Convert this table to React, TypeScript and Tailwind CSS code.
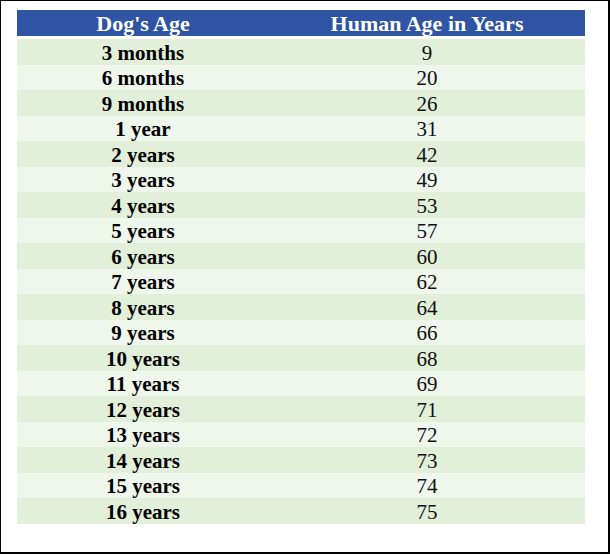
import React from "react";

const rows: [string, number][] = [
  ["3 months", 9],
  ["6 months", 20],
  ["9 months", 26],
  ["1 year", 31],
  ["2 years", 42],
  ["3 years", 49],
  ["4 years", 53],
  ["5 years", 57],
  ["6 years", 60],
  ["7 years", 62],
  ["8 years", 64],
  ["9 years", 66],
  ["10 years", 68],
  ["11 years", 69],
  ["12 years", 71],
  ["13 years", 72],
  ["14 years", 73],
  ["15 years", 74],
  ["16 years", 75],
];

export default function App() {
  return (
    <div className="w-[610px] h-[555px] bg-white">
      <div className="w-[610px] h-[554px] border-l border-t border-r-2 border-b-2 border-black pl-4 pt-[9px] font-['Liberation_Serif',serif]">
        <div className="w-[568px]">
          <div className="flex h-[26px] bg-[#2f54a3] text-white font-bold text-[22px] leading-none items-center pt-[2px]">
            <div className="w-[252px] text-center">Dog's Age</div>
            <div className="flex-1 text-center">Human Age in Years</div>
          </div>
          <div className="mt-[3px] grid grid-cols-[252px_1fr] auto-rows-[25.5px]">
            {rows.map(([dog, human], i) => {
              const bg = i % 2 === 0 ? "bg-[#e2efd9]" : "bg-[#eff6ec]";
              return (
                <React.Fragment key={dog}>
                  <div className={`${bg} flex items-center justify-center pt-[3px] font-bold text-[21px] text-black leading-none`}>
                    {dog}
                  </div>
                  <div className={`${bg} flex items-center justify-center pt-[3px] text-[21px] text-[#111] leading-none`}>
                    {human}
                  </div>
                </React.Fragment>
              );
            })}
          </div>
        </div>
      </div>
    </div>
  );
}
